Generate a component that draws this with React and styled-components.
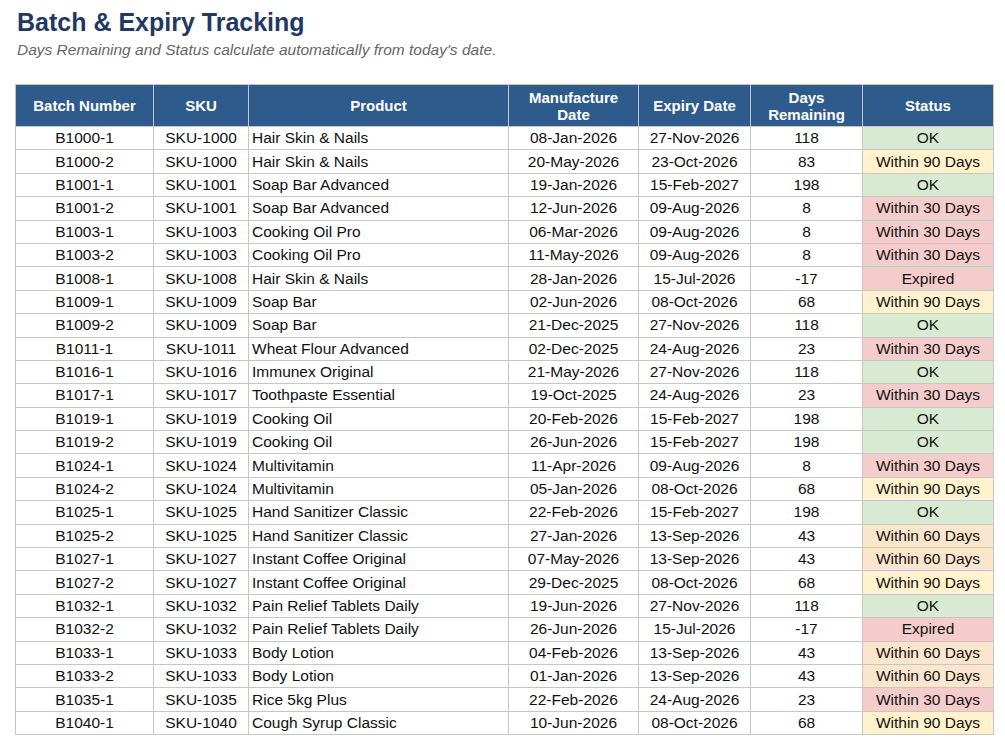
import React from 'react';
import styled, { createGlobalStyle } from "styled-components";

const GlobalStyle = createGlobalStyle`
    body {
        margin: 0;
        background: #ffffff;
        font-family: "Liberation Sans", Arial, sans-serif;
    }
`;

const Page = styled.div`
    padding: 6px 12px 0 15px;
`;

const Title = styled.h1`
    margin: 0 0 0 2px;
    font-size: 25px;
    line-height: 32px;
    font-weight: bold;
    color: #1f3864;
`;

const Subtitle = styled.p`
    margin: 2px 0 0 2px;
    font-size: 15.5px;
    line-height: 20px;
    font-style: italic;
    color: #666666;
`;

const Table = styled.table`
    margin-top: 24px;
    width: 978px;
    table-layout: fixed;
    border-collapse: collapse;
    font-size: 15.5px;
    color: #111111;

    th, td {
        border: 1px solid #c6c6c6;
        padding: 0 3px;
        white-space: nowrap;
        overflow: hidden;
    }

    th {
        height: 41px;
        background: #2e5b8c;
        color: #ffffff;
        font-size: 15px;
        font-weight: bold;
        line-height: 17px;
        text-align: center;
    }

    td {
        height: 22.4px;
        line-height: 22px;
        text-align: center;
    }
`;

const statusColors = {
    "OK": "#d9ead3",
    "Within 90 Days": "#fff2cc",
    "Within 60 Days": "#fce5cd",
    "Within 30 Days": "#f4cccc",
    "Expired": "#f4cccc",
};

const ProductCell = styled.td`
    && {
        text-align: left;
    }
`;

const StatusCell = styled.td`
    && {
        background: ${props => statusColors[props.$status] || "#ffffff"};
    }
`;

const widths = [138, 95, 260, 130, 112, 112, 131];

const rows = [
    ["B1000-1", "SKU-1000", "Hair Skin & Nails", "08-Jan-2026", "27-Nov-2026", "118", "OK"],
    ["B1000-2", "SKU-1000", "Hair Skin & Nails", "20-May-2026", "23-Oct-2026", "83", "Within 90 Days"],
    ["B1001-1", "SKU-1001", "Soap Bar Advanced", "19-Jan-2026", "15-Feb-2027", "198", "OK"],
    ["B1001-2", "SKU-1001", "Soap Bar Advanced", "12-Jun-2026", "09-Aug-2026", "8", "Within 30 Days"],
    ["B1003-1", "SKU-1003", "Cooking Oil Pro", "06-Mar-2026", "09-Aug-2026", "8", "Within 30 Days"],
    ["B1003-2", "SKU-1003", "Cooking Oil Pro", "11-May-2026", "09-Aug-2026", "8", "Within 30 Days"],
    ["B1008-1", "SKU-1008", "Hair Skin & Nails", "28-Jan-2026", "15-Jul-2026", "-17", "Expired"],
    ["B1009-1", "SKU-1009", "Soap Bar", "02-Jun-2026", "08-Oct-2026", "68", "Within 90 Days"],
    ["B1009-2", "SKU-1009", "Soap Bar", "21-Dec-2025", "27-Nov-2026", "118", "OK"],
    ["B1011-1", "SKU-1011", "Wheat Flour Advanced", "02-Dec-2025", "24-Aug-2026", "23", "Within 30 Days"],
    ["B1016-1", "SKU-1016", "Immunex Original", "21-May-2026", "27-Nov-2026", "118", "OK"],
    ["B1017-1", "SKU-1017", "Toothpaste Essential", "19-Oct-2025", "24-Aug-2026", "23", "Within 30 Days"],
    ["B1019-1", "SKU-1019", "Cooking Oil", "20-Feb-2026", "15-Feb-2027", "198", "OK"],
    ["B1019-2", "SKU-1019", "Cooking Oil", "26-Jun-2026", "15-Feb-2027", "198", "OK"],
    ["B1024-1", "SKU-1024", "Multivitamin", "11-Apr-2026", "09-Aug-2026", "8", "Within 30 Days"],
    ["B1024-2", "SKU-1024", "Multivitamin", "05-Jan-2026", "08-Oct-2026", "68", "Within 90 Days"],
    ["B1025-1", "SKU-1025", "Hand Sanitizer Classic", "22-Feb-2026", "15-Feb-2027", "198", "OK"],
    ["B1025-2", "SKU-1025", "Hand Sanitizer Classic", "27-Jan-2026", "13-Sep-2026", "43", "Within 60 Days"],
    ["B1027-1", "SKU-1027", "Instant Coffee Original", "07-May-2026", "13-Sep-2026", "43", "Within 60 Days"],
    ["B1027-2", "SKU-1027", "Instant Coffee Original", "29-Dec-2025", "08-Oct-2026", "68", "Within 90 Days"],
    ["B1032-1", "SKU-1032", "Pain Relief Tablets Daily", "19-Jun-2026", "27-Nov-2026", "118", "OK"],
    ["B1032-2", "SKU-1032", "Pain Relief Tablets Daily", "26-Jun-2026", "15-Jul-2026", "-17", "Expired"],
    ["B1033-1", "SKU-1033", "Body Lotion", "04-Feb-2026", "13-Sep-2026", "43", "Within 60 Days"],
    ["B1033-2", "SKU-1033", "Body Lotion", "01-Jan-2026", "13-Sep-2026", "43", "Within 60 Days"],
    ["B1035-1", "SKU-1035", "Rice 5kg Plus", "22-Feb-2026", "24-Aug-2026", "23", "Within 30 Days"],
    ["B1040-1", "SKU-1040", "Cough Syrup Classic", "10-Jun-2026", "08-Oct-2026", "68", "Within 90 Days"],
];

const App = () => {
    return (
        <Page>
            <GlobalStyle />
            <Title>Batch &amp; Expiry Tracking</Title>
            <Subtitle>Days Remaining and Status calculate automatically from today's date.</Subtitle>
            <Table>
                <colgroup>
                    {widths.map((w, i) => <col key={i} style={{ width: w }} />)}
                </colgroup>
                <thead>
                    <tr>
                        <th>Batch Number</th>
                        <th>SKU</th>
                        <th>Product</th>
                        <th>Manufacture<br />Date</th>
                        <th>Expiry Date</th>
                        <th>Days<br />Remaining</th>
                        <th>Status</th>
                    </tr>
                </thead>
                <tbody>
                    {rows.map(r => (
                        <tr key={r[0]}>
                            <td>{r[0]}</td>
                            <td>{r[1]}</td>
                            <ProductCell>{r[2]}</ProductCell>
                            <td>{r[3]}</td>
                            <td>{r[4]}</td>
                            <td>{r[5]}</td>
                            <StatusCell $status={r[6]}>{r[6]}</StatusCell>
                        </tr>
                    ))}
                </tbody>
            </Table>
        </Page>
    );
};

export default App;
